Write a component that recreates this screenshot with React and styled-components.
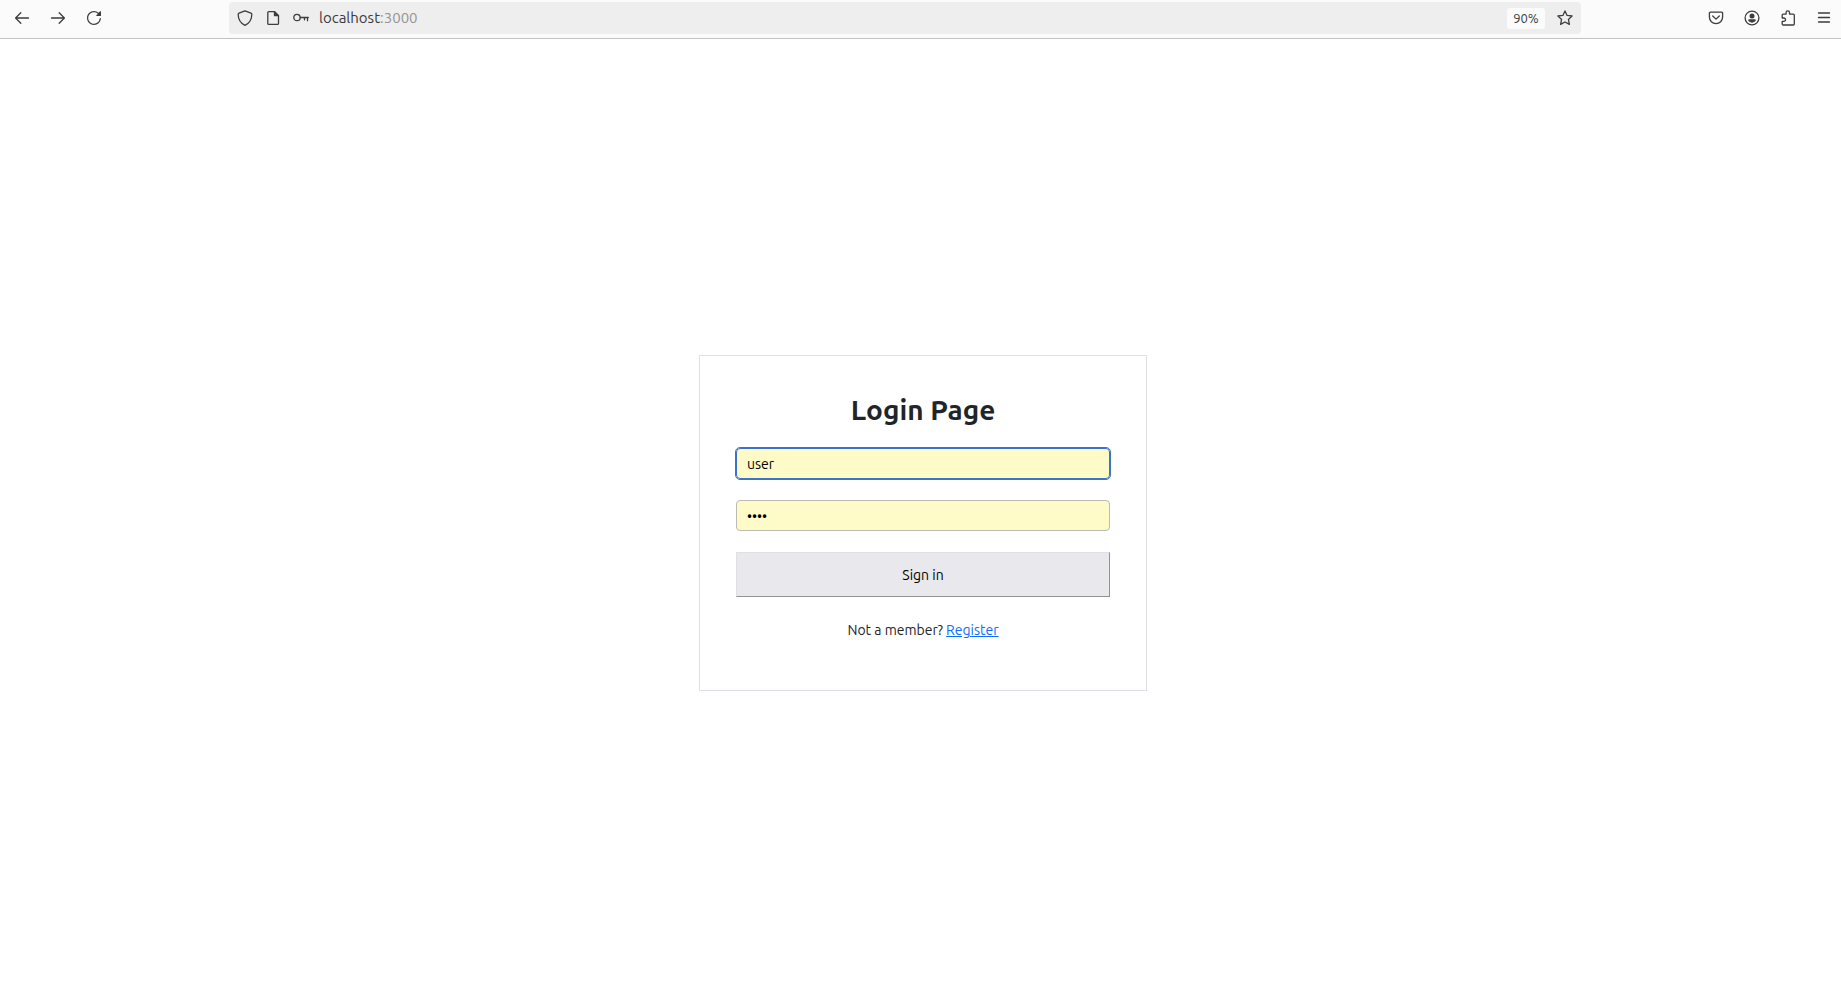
import React from "react";
import styled, { createGlobalStyle } from "styled-components";

const GlobalStyle = createGlobalStyle`
  *, *::before, *::after { box-sizing: border-box; }
  body {
    margin: 0;
    background: #fff;
    color: #212529;
    font-family: Ubuntu, "Noto Sans", sans-serif;
    font-size: 14px;
  }
`;

const Page = styled.div`
  display: flex;
  flex-direction: column;
  min-height: 100vh;
`;

const Toolbar = styled.header`
  display: flex;
  align-items: center;
  height: 39px;
  padding: 0 0 2px 4px;
  background: #fbfbfb;
  border-bottom: 1px solid #c2c2c2;
`;

const ToolGroup = styled.nav`
  display: flex;
  gap: 1px;
`;

const ToolButton = styled.button`
  display: flex;
  align-items: center;
  justify-content: center;
  width: ${(p) => p.$width || 35}px;
  height: 32px;
  padding: 0;
  border: 0;
  border-radius: 4px;
  background: transparent;
  color: #3d3d3d;
`;

const AddressBar = styled.div`
  display: flex;
  align-items: center;
  flex: 1;
  min-width: 0;
  height: 32px;
  margin: 0 117px 0 118px;
  padding: 0 2px;
  border-radius: 4px;
  background: #eeeeee;
`;

const Address = styled.span`
  flex: 1;
  padding-left: 4px;
  color: #3b3b3b;
  font-size: 15px;
  line-height: 20px;
`;

const Port = styled.span`
  color: #959595;
`;

const ZoomButton = styled.button`
  width: 38px;
  height: 21px;
  margin-right: 6px;
  padding: 0;
  border: 0;
  border-radius: 3px;
  background: #fbfbfb;
  color: #3b3b3b;
  font-family: inherit;
  font-size: 13px;
  line-height: 20px;
`;

const Main = styled.main`
  display: flex;
  flex: 1;
  align-items: center;
  justify-content: center;
  padding: 18px 0 0 5px;
`;

const Card = styled.form`
  display: flex;
  flex-direction: column;
  gap: 21px;
  width: 448px;
  padding: 36px;
  border: 1px solid #dee0e6;
`;

const Title = styled.h1`
  margin: 0;
  font-size: 28px;
  font-weight: 600;
  line-height: 35px;
  text-align: center;
`;

const Field = styled.input`
  width: 100%;
  height: 31px;
  padding: 0 10px;
  border: 1px solid ${(p) => (p.$active ? "#3b73ca" : "#babbb2")};
  border-radius: 4px;
  outline: ${(p) => (p.$active ? "1px solid #3b73ca" : "none")};
  background: #fffbc8;
  color: #000;
  font-family: inherit;
  font-size: 14px;
`;

const SubmitButton = styled.button`
  height: 45px;
  padding: 0;
  border: 1px solid;
  border-color: #e0e0e2 #929294 #929294 #e0e0e2;
  background: #e9e9ed;
  color: #000;
  font-family: inherit;
  font-size: 14px;
`;

const Note = styled.p`
  margin: 0 0 12px;
  line-height: 24px;
  text-align: center;
`;

const RegisterLink = styled.a`
  color: #0d6efd;
  text-decoration: underline;
`;

const Svg = styled.svg`
  display: block;
  fill: none;
  stroke: currentColor;
  stroke-width: 1.3;
  stroke-linecap: round;
  stroke-linejoin: round;
`;

const Icon = ({ children }) => (
  <Svg width="16" height="16" viewBox="0 0 16 16" aria-hidden="true">{children}</Svg>
);

const icons = {
  back: <path d="M14.5 8H1.8M6.8 2.8 1.6 8l5.2 5.2" />,
  forward: <path d="M1.5 8h12.7M9.2 2.8 14.4 8l-5.2 5.2" />,
  reload: (
    <path
      fill="currentColor"
      stroke="none"
      d="M10.707 6H14.7l.3-.3V1.707a.5.5 0 0 0-.854-.354l-1.459 1.459A6.95 6.95 0 0 0 8 1C4.141 1 1 4.141 1 8s3.141 7 7 7a6.97 6.97 0 0 0 6.968-6.322.626.626 0 0 0-.562-.682.635.635 0 0 0-.682.562A5.726 5.726 0 0 1 8 13.75c-3.171 0-5.75-2.579-5.75-5.75S4.829 2.25 8 2.25a5.71 5.71 0 0 1 3.805 1.445l-1.451 1.451a.5.5 0 0 0 .353.854z"
    />
  ),
  shield: <path d="M8 .8 14 3.2q.8.3.8 1.1C14.8 9.5 12 13.5 8 15.3 4 13.5 1.2 9.5 1.2 4.3q0-.8.8-1.1Z" />,
  page: (
    <>
      <path d="M3.8 1.6h5.7l4 4v7.8a1 1 0 0 1-1 1H3.8a1 1 0 0 1-1-1V2.6a1 1 0 0 1 1-1Z" />
      <path d="M9.5 1.6v4h4Z" fill="currentColor" />
    </>
  ),
  key: (
    <>
      <circle cx="4" cy="7.5" r="3.2" />
      <path d="M7.3 7.5h8M14.5 7.5v3.2M11.5 7.5v2.3" />
    </>
  ),
  star: <path d="m8 .9 2.1 4.5 5 .6-3.7 3.4 1 5L8 12l-4.4 2.4 1-5L.9 6l5-.6Z" />,
  pocket: (
    <>
      <path d="M2.4 2.1h11.2a1 1 0 0 1 1 1v3.9a6.6 6.6 0 0 1-13.2 0V3.1a1 1 0 0 1 1-1Z" />
      <path d="M4.7 6 8 9.1l3.3-3.1" />
    </>
  ),
  account: (
    <>
      <circle cx="8" cy="8" r="6.9" />
      <circle cx="8" cy="5.9" r="2.5" fill="currentColor" stroke="none" />
      <path d="M5.4 9.3h5.2q1.3 0 1.3 1.3Q10.5 12.7 8 12.7t-3.9-2.1q0-1.3 1.3-1.3Z" fill="currentColor" stroke="none" />
    </>
  ),
  extension: <path d="M2.2 8V5.1a1 1 0 0 1 1-1h2.9V2.5a1.7 1.7 0 0 1 3.4 0v1.6h3.8a1 1 0 0 1 1 1v8.9a1 1 0 0 1-1 1H3.2a1 1 0 0 1-1-1v-2.7h1.7a1.65 1.65 0 0 0 0-3.3Z" />,
  menu: <path d="M2.5 3h11M2.5 7.5h11M2.5 12h11" />,
};

const Tool = ({ label, name, width }) => (
  <ToolButton type="button" aria-label={label} $width={width}>
    <Icon>{icons[name]}</Icon>
  </ToolButton>
);

export default function App() {
  return (
    <Page>
      <GlobalStyle />
      <Toolbar>
        <ToolGroup aria-label="History">
          <Tool label="Back" name="back" />
          <Tool label="Forward" name="forward" />
          <Tool label="Reload" name="reload" />
        </ToolGroup>
        <AddressBar>
          <Tool label="Tracking protection" name="shield" width={28} />
          <Tool label="Site information" name="page" width={28} />
          <Tool label="Saved password" name="key" width={28} />
          <Address>localhost<Port>:3000</Port></Address>
          <ZoomButton type="button" aria-label="Zoom level 90%">90%</ZoomButton>
          <Tool label="Bookmark this page" name="star" width={28} />
        </AddressBar>
        <ToolGroup aria-label="Browser tools">
          <Tool label="Save to Pocket" name="pocket" />
          <Tool label="Account" name="account" />
          <Tool label="Extensions" name="extension" />
          <Tool label="Menu" name="menu" />
        </ToolGroup>
      </Toolbar>
      <Main>
        <Card onSubmit={(e) => e.preventDefault()}>
          <Title>Login Page</Title>
          <Field type="text" aria-label="Username" defaultValue="user" $active />
          <Field type="password" aria-label="Password" defaultValue="user" />
          <SubmitButton type="submit">Sign in</SubmitButton>
          <Note>
            Not a member? <RegisterLink href="#register">Register</RegisterLink>
          </Note>
        </Card>
      </Main>
    </Page>
  );
}
